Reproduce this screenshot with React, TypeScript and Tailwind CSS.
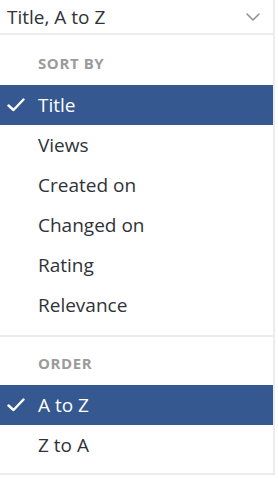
import React from 'react';

interface SortOption {
    label: string;
    selected?: boolean;
}

const sortBy: SortOption[] = [
    { label: 'Title', selected: true },
    { label: 'Views' },
    { label: 'Created on' },
    { label: 'Changed on' },
    { label: 'Rating' },
    { label: 'Relevance' },
];

const order: SortOption[] = [
    { label: 'A to Z', selected: true },
    { label: 'Z to A' },
];

function Check() {
    return (
        <svg width="18" height="14" viewBox="0 0 18 14" fill="none" className="absolute left-[7px] top-1/2 -translate-y-1/2">
            <path d="M1.5 7.5 L6.5 12 L16.5 1.5" stroke="white" strokeWidth="2.4" strokeLinecap="round" strokeLinejoin="round" />
        </svg>
    );
}

function OptionRow({ label, selected }: SortOption) {
    return (
        <div
            className={
                selected
                    ? 'relative h-[40px] flex items-center pl-[38px] bg-[#355891] text-white'
                    : 'relative h-[40px] flex items-center pl-[38px] text-[#2f3338]'
            }
        >
            {selected && <Check />}
            <span className="text-[19px] leading-[24px]">{label}</span>
        </div>
    );
}

function Section({ title, options, last }: { title: string; options: SortOption[]; last?: boolean }) {
    return (
        <div className={last ? 'pb-[8px]' : 'pb-[10px] border-b-2 border-[#ececec]'}>
            <div className="pt-[16px] pb-[12px] pl-[38px] text-[15px] leading-[20px] font-bold text-[#9b9b9b] tracking-[0.6px]">
                {title}
            </div>
            {options.map((o) => (
                <OptionRow key={o.label} label={o.label} selected={o.selected} />
            ))}
        </div>
    );
}

export default function App() {
    return (
        <div className="w-[278px] h-[478px] bg-white" style={{ fontFamily: '"Open Sans", "Liberation Sans", sans-serif' }}>
            <div className="w-[275px] h-[35px] flex items-center justify-between pl-[7px] pr-[13px] border-r-2 border-b-2 border-[#ececec]">
                <span className="text-[19px] leading-[24px] text-[#2f3338]">Title, A to Z</span>
                <svg width="14" height="8" viewBox="0 0 14 8" fill="none">
                    <path d="M1 1 L7 7 L13 1" stroke="#8f8f8f" strokeWidth="1.5" strokeLinecap="round" strokeLinejoin="round" />
                </svg>
            </div>
            <div className="w-[275px] pt-[2px] border-r-2 border-b-2 border-[#ececec]">
                <Section title="SORT BY" options={sortBy} />
                <Section title="ORDER" options={order} last />
            </div>
        </div>
    );
}
